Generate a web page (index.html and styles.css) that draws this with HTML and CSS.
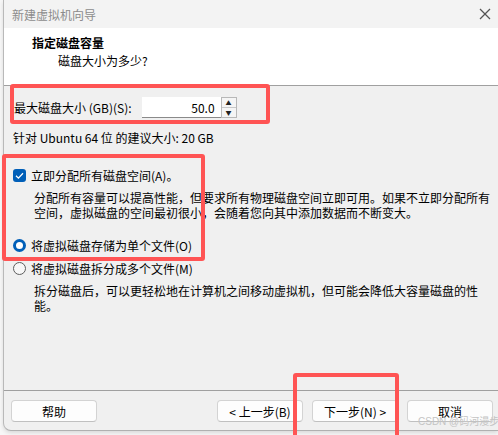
FILE: index.html
```html
<!DOCTYPE html>
<html lang="zh">
<head>
  <meta charset="utf-8">
  <title>新建虚拟机向导</title>
  <link rel="stylesheet" href="styles.css">
</head>
<body>
  <div class="window">
    <div class="titlebar">
      <span class="titlebar_text">新建虚拟机向导</span>
      <svg class="close" width="12" height="12" viewBox="0 0 12 12">
        <line x1="1" y1="1" x2="11" y2="11" stroke="#555555" stroke-width="1.2"/>
        <line x1="11" y1="1" x2="1" y2="11" stroke="#555555" stroke-width="1.2"/>
      </svg>
    </div>
    <div class="header">
      <div class="header_title">指定磁盘容量</div>
      <div class="header_sub">磁盘大小为多少?</div>
    </div>
    <div class="content">
      <div class="size_row">
        <span>最大磁盘大小 (GB)(S):</span>
        <div class="spin">
          <div class="spin_value">50.0</div>
          <div class="spin_btns">
            <div class="spin_btn">&#9650;</div>
            <div class="spin_btn">&#9660;</div>
          </div>
        </div>
      </div>
      <div class="advice">针对 Ubuntu 64 位 的建议大小: 20 GB</div>
      <div class="option option_first">
        <span class="checkbox">
          <svg width="13" height="13" viewBox="0 0 13 13">
            <path d="M3 6.8 L5.4 9.1 L10 4.2" stroke="#fff" stroke-width="1.3" fill="none"/>
          </svg>
        </span>
        <span>立即分配所有磁盘空间(A)。</span>
      </div>
      <p class="desc">分配所有容量可以提高性能，但要求所有物理磁盘空间立即可用。如果不立即分配所有<br>空间，虚拟磁盘的空间最初很小，会随着您向其中添加数据而不断变大。</p>
      <div class="option option_radio1">
        <span class="radio radio_on"></span>
        <span>将虚拟磁盘存储为单个文件(O)</span>
      </div>
      <div class="option option_radio2">
        <span class="radio"></span>
        <span>将虚拟磁盘拆分成多个文件(M)</span>
      </div>
      <p class="desc">拆分磁盘后，可以更轻松地在计算机之间移动虚拟机，但可能会降低大容量磁盘的性<br>能。</p>
    </div>
    <div class="footer">
      <button class="btn btn_help">帮助</button>
      <div class="footer_right">
        <button class="btn">&lt; 上一步(B)</button>
        <button class="btn">下一步(N) &gt;</button>
        <button class="btn">取消</button>
      </div>
    </div>
  </div>

  <div class="mark mark_size"></div>
  <div class="mark mark_options"></div>
  <div class="mark mark_next"></div>
  <div class="watermark">CSDN @码河漫步</div>
</body>
</html>
```
FILE: styles.css
```css
*, *:before, *:after {
  box-sizing: border-box;
}
html, body {
  margin: 0;
  padding: 0;
}
body {
  width: 498px;
  height: 435px;
  overflow: hidden;
  background: #f7f7f7;
  font-family: "Noto Sans CJK SC", "Noto Sans", sans-serif;
  font-size: 12px;
  color: #000;
  position: relative;
}

.window {
  margin-left: 3px;
  width: 495px;
  height: 431px;
  border-left: 1px solid #b9b9b9;
  border-bottom: 1px solid #b0b0b0;
  border-bottom-left-radius: 8px;
  background: #f0f0f0;
  box-shadow: 0 2px 4px rgba(0, 0, 0, 0.12);
  display: flex;
  flex-direction: column;
  overflow: hidden;
}

.titlebar {
  height: 28px;
  background: #f3f3f3;
  display: flex;
  align-items: center;
  justify-content: space-between;
  padding: 0 7px 0 8px;
}
.titlebar_text {
  color: #8c8c8c;
  line-height: 15px;
}
.close {
  display: block;
  flex: 0 0 12px;
}

.header {
  height: 58px;
  background: #fff;
  border-bottom: 1px solid #a0a0a0;
  padding: 7px 0 0 28px;
  line-height: 15px;
}
.header_title {
  font-weight: bold;
}
.header_sub {
  margin: 3px 0 0 26px;
}

.content {
  height: 304px;
  padding-left: 9px;
  line-height: 15px;
}
.size_row {
  display: flex;
  align-items: center;
  margin-top: 11px;
  height: 21px;
  padding-left: 1px;
}
.spin {
  display: flex;
  margin-left: 10px;
  height: 21px;
}
.spin_value {
  width: 79px;
  background: #fff;
  border-bottom: 1px solid #8a8a8a;
  text-align: right;
  padding: 3px 6px 0 0;
}
.spin_btns {
  width: 16px;
  display: flex;
  flex-direction: column;
  border: 1px solid #b8b8b8;
  background: #f5f5f5;
}
.spin_btn {
  flex: 1;
  font-size: 6px;
  line-height: 9px;
  text-align: center;
  color: #222;
}
.spin_btn + .spin_btn {
  border-top: 1px solid #c8c8c8;
}

.advice {
  margin-top: 12px;
}

.option {
  display: flex;
  align-items: center;
  gap: 5px;
  height: 15px;
}
.option_first {
  margin-top: 23px;
}
.option_radio1 {
  margin-top: 18px;
}
.option_radio2 {
  margin-top: 8px;
}
.checkbox {
  width: 13px;
  height: 13px;
  border-radius: 3px;
  background: #005fb8;
  display: flex;
}
.radio {
  width: 13px;
  height: 13px;
  border-radius: 50%;
  border: 1px solid #5d5d5d;
  background: #f7f7f7;
}
.radio_on {
  border: 3.5px solid #005fb8;
  background: #fff;
}
.desc {
  margin: 7px 0 0 21px;
  line-height: 15px;
  white-space: nowrap;
}

.footer {
  flex: 1;
  border-top: 1px solid #a0a0a0;
  display: flex;
  padding: 9px 0 0 7px;
}
.btn {
  height: 22px;
  width: 86px;
  font-family: inherit;
  font-size: 12px;
  color: #000;
  background: #fdfdfd;
  border: 1px solid #d3d3d3;
  border-bottom-color: #c0c0c0;
  border-radius: 4px;
  padding: 0;
}
.footer_right {
  display: flex;
  gap: 9px;
  margin-left: 120px;
}

.mark {
  position: absolute;
  border: 4px solid #ff5454;
  border-radius: 3px;
}
.mark_size {
  left: 10px;
  top: 84px;
  width: 260px;
  height: 40px;
}
.mark_options {
  left: 2px;
  top: 154px;
  width: 203px;
  height: 107px;
}
.mark_next {
  left: 293px;
  top: 373px;
  width: 106px;
  height: 70px;
}
.watermark {
  position: absolute;
  left: 418px;
  top: 416px;
  line-height: 12px;
  font-size: 10px;
  white-space: nowrap;
  color: #c4c4c4;
  font-family: "Liberation Sans", "Noto Sans CJK SC", sans-serif;
}
```
